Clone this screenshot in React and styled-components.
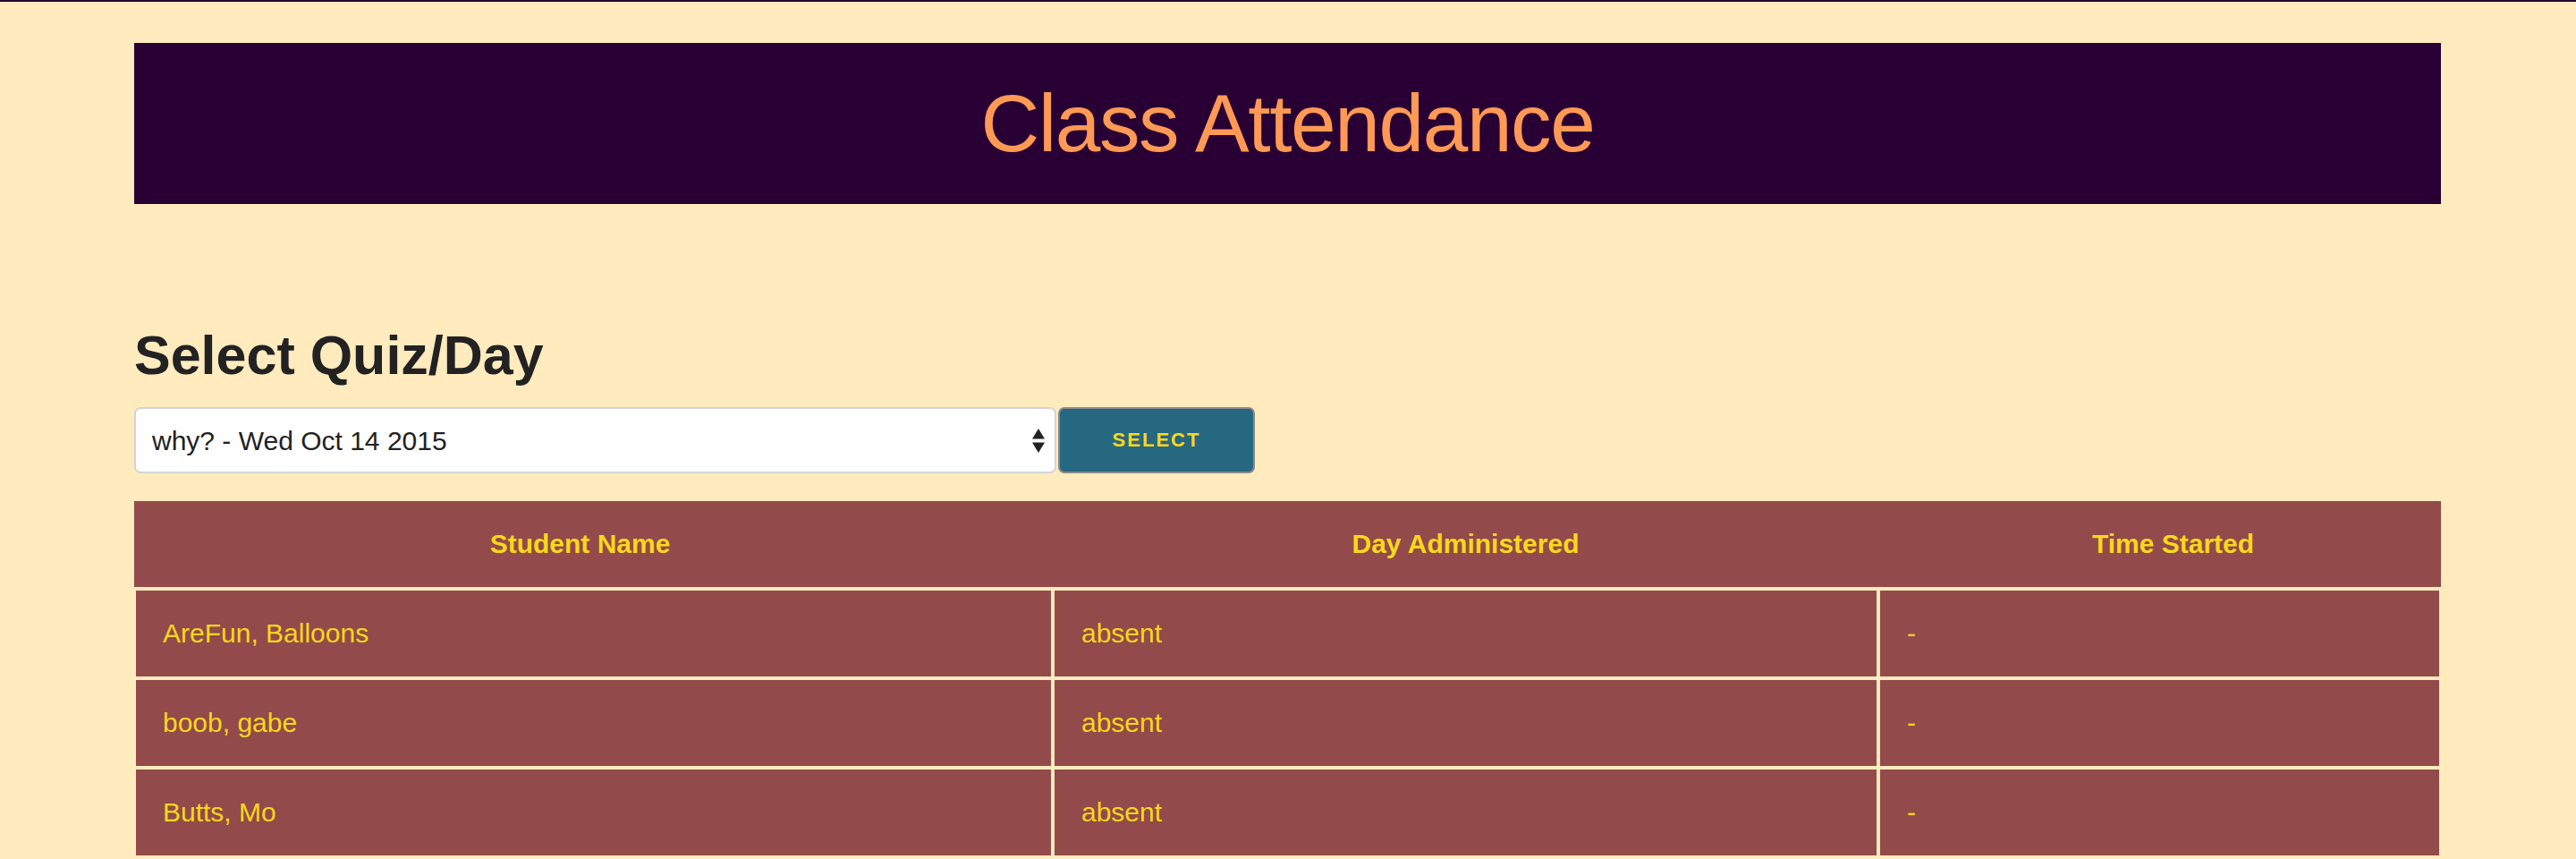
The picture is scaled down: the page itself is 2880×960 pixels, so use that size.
import React from 'react';
import styled, { createGlobalStyle } from 'styled-components';

const cream = '#ffebbd';
const maroon = '#924b4a';
const yellow = '#f9d71c';

const GlobalStyle = createGlobalStyle`
  *, *::before, *::after { box-sizing: border-box; }
  html, body {
    margin: 0;
    padding: 0;
    background: ${cream};
  }
  body {
    border-top: 2px solid #290033;
    font-family: "Liberation Sans", Arial, sans-serif;
    min-height: 960px;
  }
`;

const Page = styled.div`
  width: 2579px;
  margin-left: 150px;
  padding-top: 46px;
`;

const Banner = styled.header`
  height: 180px;
  background: #290033;
  display: flex;
  align-items: center;
  justify-content: center;
`;

const Title = styled.h1`
  margin: 0;
  font-size: 91px;
  font-weight: 400;
  color: #ff9955;
  letter-spacing: -1.4px;
`;

const Heading = styled.h2`
  margin: 133px 0 22px;
  font-size: 61px;
  line-height: 72px;
  font-weight: 700;
  color: #222;
`;

const Controls = styled.form`
  display: flex;
  gap: 2px;
  height: 74px;
  margin-bottom: 31px;
`;

const SelectWrap = styled.div`
  position: relative;
  width: 1031px;
  height: 100%;
`;

const Dropdown = styled.select`
  appearance: none;
  -webkit-appearance: none;
  width: 100%;
  height: 100%;
  padding: 0 40px 0 18px;
  background: #fff;
  border: 2px solid #d4d4d4;
  border-radius: 7px;
  font-family: "Liberation Sans", Arial, sans-serif;
  font-size: 30px;
  color: #222;
  outline: none;
`;

const Arrows = styled.svg`
  position: absolute;
  right: 13px;
  top: 24px;
  pointer-events: none;
`;

const Button = styled.button`
  width: 220px;
  height: 100%;
  background: #266880;
  border: 2px solid #8a8a8a;
  border-radius: 7px;
  color: ${yellow};
  font-family: "Liberation Sans", Arial, sans-serif;
  font-size: 22px;
  font-weight: 700;
  letter-spacing: 2px;
  text-transform: uppercase;
  cursor: pointer;
`;

const Table = styled.table`
  width: 2579px;
  table-layout: fixed;
  border-collapse: separate;
  border-spacing: 0;
  color: ${yellow};
  font-size: 30px;
`;

const HeadCell = styled.th`
  background: ${maroon};
  border-bottom: 2px solid ${cream};
  line-height: 96px;
  padding: 0 ${(p) => (p.$shift < 0 ? -p.$shift * 2 : 0)}px 0
    ${(p) => (p.$shift > 0 ? p.$shift * 2 : 0)}px;
  font-weight: 700;
  text-align: center;
`;

const Cell = styled.td`
  background: ${maroon};
  border: 2px solid ${cream};
  line-height: 96px;
  padding: 0 30px;
  white-space: nowrap;
`;

const rows = [
  { name: 'AreFun, Balloons', day: 'absent', time: '-' },
  { name: 'boob, gabe', day: 'absent', time: '-' },
  { name: 'Butts, Mo', day: 'absent', time: '-' },
];

export default function App() {
  return (
    <>
      <GlobalStyle />
      <Page>
        <Banner>
          <Title>Class Attendance</Title>
        </Banner>

        <Heading>Select Quiz/Day</Heading>
        <Controls onSubmit={(e) => e.preventDefault()}>
          <SelectWrap>
            <Dropdown defaultValue="why">
              <option value="why">why? - Wed Oct 14 2015</option>
            </Dropdown>
            <Arrows width="14" height="27" viewBox="0 0 14 27">
              <path d="M7 0 L14 11.5 L0 11.5 Z" fill="#222" />
              <path d="M0 15.5 L14 15.5 L7 27 Z" fill="#222" />
            </Arrows>
          </SelectWrap>
          <Button type="submit">Select</Button>
        </Controls>

        <Table>
          <colgroup>
            <col style={{ width: 1027 }} />
            <col style={{ width: 923 }} />
            <col style={{ width: 629 }} />
          </colgroup>
          <thead>
            <tr>
              <HeadCell $shift={-15}>Student Name</HeadCell>
              <HeadCell $shift={0}>Day Administered</HeadCell>
              <HeadCell $shift={15}>Time Started</HeadCell>
            </tr>
          </thead>
          <tbody>
            {rows.map((r) => (
              <tr key={r.name}>
                <Cell>{r.name}</Cell>
                <Cell>{r.day}</Cell>
                <Cell>{r.time}</Cell>
              </tr>
            ))}
          </tbody>
        </Table>
      </Page>
    </>
  );
}
